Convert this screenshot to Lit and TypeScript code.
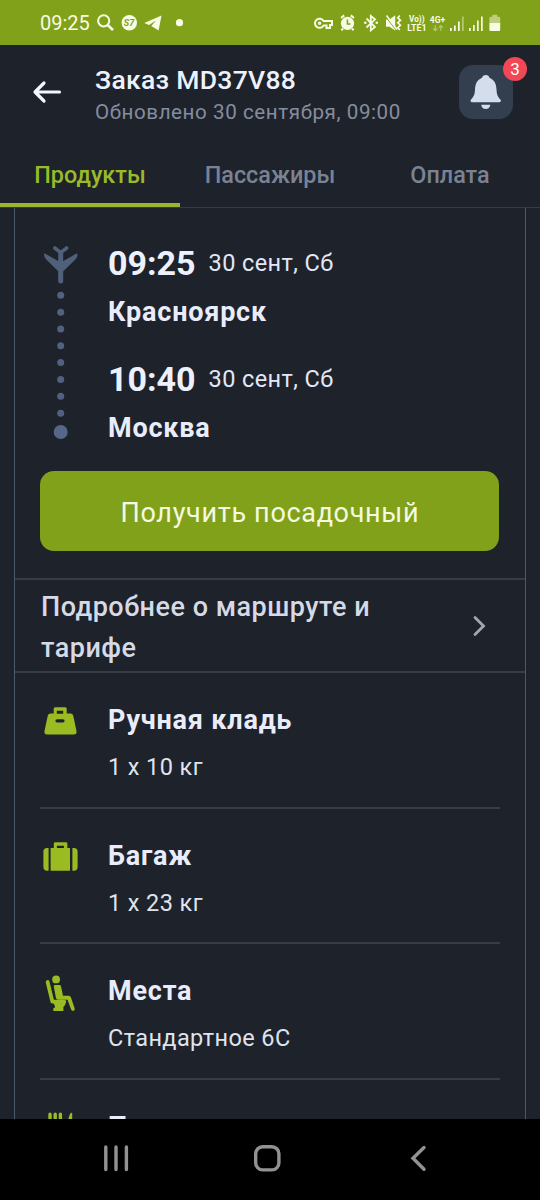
import { LitElement, html, css, svg } from "lit";
import { customElement, property } from "lit/decorators.js";

@customElement("status-bar")
export class StatusBar extends LitElement {
  static styles = css`
    :host { display: flex; justify-content: space-between; height: 45px; box-sizing: border-box; padding: 0 38px 0 40px; background: #82a11b; color: #f7fce4; font-family: Roboto, sans-serif; }
    .left { display: flex; gap: 7px; }
    .time { font-size: 20px; line-height: 45px; padding-top: 1px; height: 45px; box-sizing: border-box; }
    svg { display: block; }
    .tiny { font: 700 9px Roboto, sans-serif; }
    .logo { font: italic 700 9px Roboto, sans-serif; }
  `;
  render() {
    return html`
      <div class="left">
        <span class="time">09:25</span>
        <svg width="90" height="45" viewBox="97 0 90 45" fill="currentColor">
          <circle cx="103.7" cy="20.8" r="5.6" fill="none" stroke="currentColor" stroke-width="2"></circle>
          <path d="M107.8 25 L113 30.2" stroke="currentColor" stroke-width="2.6"></path>
          <circle cx="129.3" cy="22.8" r="7.7"></circle>
          <text class="logo" x="123.8" y="26" fill="#82a11b">S7</text>
          <path d="M161.5 15.6 L144.3 23 L149 25 L156 20.5 L151.3 26 L158.6 30.5 Z"></path>
          <circle cx="179.5" cy="22.7" r="3.6"></circle>
        </svg>
      </div>
      <svg width="190" height="45" viewBox="312 0 190 45" fill="currentColor">
        <g fill="none" stroke="currentColor" stroke-width="2">
          <path d="M323.6 21 H332 V25 H330 V28 H326.5 V25.5 H323.6 A4.6 4.6 0 1 1 323.6 21 Z"></path>
          <circle cx="319.6" cy="23.2" r="1" stroke-width="1.4"></circle>
          <path d="M341 18 L344.2 15.4 M354 18 L350.8 15.4 M343 28.5 L341.4 30.2 M352 28.5 L353.6 30.2"></path>
          <path d="M366.5 18.5 L375 27 L370.8 30.4 V16 L375 19.4 L366.5 27.5" stroke-width="1.8"></path>
        </g>
        <circle cx="347.5" cy="23.3" r="6.6"></circle>
        <path d="M347.4 19.5 V24 H350.5" fill="none" stroke="#82a11b" stroke-width="1.5"></path>
        <circle cx="365.3" cy="22.8" r="1.3"></circle><circle cx="376.8" cy="22.8" r="1.3"></circle>
        <path d="M386 19.5 H389.5 L395.2 15.2 V30.5 L389.5 26.8 H386 Z"></path>
        <path d="M385.5 16.5 L396 30" stroke="#82a11b" stroke-width="1"></path>
        <path d="M386.5 15.5 L397 29.5" stroke="currentColor" stroke-width="1.6"></path>
        <path d="M399.8 15.5 l-2 2.4 l2.6 2.4 l-2.6 2.5 l2.6 2.4 l-2.6 2.5 l2 2.3" fill="none" stroke="currentColor" stroke-width="1.7"></path>
        <text class="tiny" x="409" y="22.3" textLength="15.5" lengthAdjust="spacingAndGlyphs">Vo))</text>
        <text class="tiny" x="407.2" y="31" textLength="19.5" lengthAdjust="spacingAndGlyphs">LTE1</text>
        <text class="tiny" x="429.8" y="22.5" textLength="15.3" lengthAdjust="spacingAndGlyphs">4G+</text>
        <path d="M435.3 25 V30.5 M433.2 28.4 L435.3 30.6 L437.4 28.4 M440.8 31 V25.5 M438.7 27.7 L440.8 25.5 L442.9 27.7" fill="none" stroke="currentColor" stroke-width="1.1" opacity=".45"></path>
        <path d="M450 28 h1.7 v3 h-1.7z M454 25.5 h1.7 v5.5 h-1.7z M458 21.5 h1.7 v9.5 h-1.7z M469 28 h1.7 v3 h-1.7z M473 25 h1.7 v6 h-1.7z M477 20.5 h1.7 v10.5 h-1.7z M481 16.5 h1.7 v14.5 h-1.7z"></path>
        <path d="M462 16.5 h1.7 v14.5 h-1.7z" opacity=".45"></path>
        <path d="M492.3 14.8 h5 v2 h1.7 q1.2 0 1.2 1.2 v5.2 h-10.8 v-5.2 q0 -1.2 1.2 -1.2 h1.7z" opacity=".5"></path>
        <path d="M489.4 23 h10.8 v6.8 q0 1.2 -1.2 1.2 h-8.4 q-1.2 0 -1.2 -1.2z"></path>
      </svg>`;
  }
}

@customElement("order-header")
export class OrderHeader extends LitElement {
  static styles = css`
    :host { display: block; height: 163px; box-sizing: border-box; border-bottom: 1px solid #353b46; }
    .bar { display: grid; grid-template-columns: 94px 1fr 54px; padding: 20px 27px 0 0; height: 97px; box-sizing: border-box; }
    .back { display: block; }
    .title { margin: 0; padding-left: 1px; font-weight: 500; font-size: 26.5px; line-height: 30px; letter-spacing: .3px; color: #edf1fc; white-space: nowrap; }
    .updated { padding-left: 1px; font-size: 20.6px; line-height: 24px; margin-top: 5px; letter-spacing: .57px; color: #858d9e; white-space: nowrap; }
    .bell { position: relative; width: 54px; height: 54px; border-radius: 14px; background: #333f4f; }
    .badge { position: absolute; right: -14px; top: -8px; width: 24px; height: 24px; border-radius: 50%; background: #f24855; color: #fff; font-size: 17px; line-height: 24px; text-align: center; }
    .tabs { display: grid; grid-template-columns: repeat(3, 180px); height: 65px; }
    .tab { font-weight: 500; font-size: 23.4px; line-height: 65px; padding-top: 1px; color: #7a8294; text-align: center; box-sizing: border-box; height: 65px; }
    .active { color: #9aba2a; border-bottom: 4px solid #98b72f; }
  `;
  render() {
    return html`
      <div class="bar">
        <svg class="back" width="94" height="54" viewBox="0 65 94 54" fill="none" stroke="#f3f6ff" stroke-width="3.2" stroke-linecap="round" stroke-linejoin="round">
          <path d="M59.5 92 H35.5 M44 83 L35 92 L44 101"></path>
        </svg>
        <div>
          <h1 class="title">Заказ MD37V88</h1>
          <div class="updated">Обновлено 30 сентября, 09:00</div>
        </div>
        <div class="bell">
          <svg width="54" height="54" viewBox="459 65 54 54" fill="#d3ddec">
            <path d="M485.8 75 C487.8 75 489 76 489.5 77.8 C494.5 80 496.3 84 496.5 89.5 C496.8 95 498 97 500.2 99.2 C501.5 100.6 501 102.3 499 102.3 H472.4 C470.4 102.3 470 100.6 471.2 99.2 C473.5 97 474.7 95 475 89.5 C475.3 84 477 80 482 77.8 C482.6 76 483.8 75 485.8 75 Z"></path>
            <path d="M481.2 104.7 H490.3 C490 107.5 488.3 109 485.8 109 C483.2 109 481.5 107.5 481.2 104.7 Z"></path>
          </svg>
          <span class="badge">3</span>
        </div>
      </div>
      <div class="tabs">
        <div class="tab active">Продукты</div>
        <div class="tab">Пассажиры</div>
        <div class="tab">Оплата</div>
      </div>`;
  }
}

const icons: Record<string, unknown> = {
  bag: svg`<path fill-rule="evenodd" d="M15.2 .3 h10 q1.5 0 1.5 1.5 v4.8 h3.8 q2.1 0 2.7 2 l3.3 15.5 q.6 3.4 -2.6 3.4 H7.1 q-3.2 0 -2.6 -3.4 L7.8 8.6 q.6 -2 2.7 -2 h3.2 V1.8 Q13.7 .3 15.2 .3 Z M16.8 3.8 v3 h6.4 v-3 z M17 12.2 a1.6 1.6 0 0 0 0 3.2 h6 a1.6 1.6 0 0 0 0 -3.2 z"></path>`,
  suitcase: svg`<path fill-rule="evenodd" d="M15.2 -.7 h10.8 q1.4 0 1.4 1.4 v4.4 h2.6 v22.6 H10.6 V5.1 h3.2 V.7 q0 -1.4 1.4 -1.4z M16.9 2.7 v2.4 h7 v-2.4z"></path><path d="M8.6 5.1 v22.6 H7.1 q-3.7 0 -3.7 -3.7 V8.8 q0 -3.7 3.7 -3.7z M32.4 5.1 v22.6 h1.5 q3.7 0 3.7 -3.7 V8.8 q0 -3.7 -3.7 -3.7z"></path>`,
  seat: svg`<g transform="translate(.8 -1)"><circle cx="15.3" cy="2.4" r="3.9"></circle><path d="M6.8 5 L11.6 24.7 H23.5" fill="none" stroke="currentColor" stroke-width="3.8" stroke-linecap="round" stroke-linejoin="round"></path><path d="M14 8 h4.8 q1.2 0 1.4 1.2 l2 9.6 h5.6 q1.7 0 2.3 1.5 l3.8 11.2 q.5 1.8 -1.2 2.3 q-1.8 .4 -2.4 -1.2 L26.7 22.7 H17.5 q-2 0 -2.4 -2 L13 9.5 Q12.8 8 14 8Z M12.5 25.5 H25 q-.4 3 -2.4 4.5 v4 H12.5 v-2.5 q1.5 -.4 1.8 -1.7z"></path></g>`,
  meal: svg`<g transform="translate(.6 -2)"><path d="M9.4 2.3 V18 M14.6 2.3 V18 M19.8 2.3 V18" stroke="currentColor" stroke-width="3.4" stroke-linecap="round"></path><path d="M31.6 1.5 Q31.5 .5 30.3 .8 Q28 3 26.6 14 V24 h5z"></path></g>`,
};

@customElement("service-row")
export class ServiceRow extends LitElement {
  @property() icon = "";
  @property() name = "";
  @property() detail = "";
  static styles = css`
    :host { display: grid; grid-template-columns: 68px 1fr; height: 135.6px; box-sizing: border-box; border-bottom: 2px solid #373d47; }
    .icon { display: block; margin-top: 34px; color: #9abb22; overflow: visible; }
    .name { margin-top: 31px; font-weight: 700; font-size: 27px; line-height: 32px; letter-spacing: .8px; color: #e9edfb; }
    .detail { margin-top: 17px; font-size: 23.5px; line-height: 28px; letter-spacing: .4px; color: #dfe3f0; }
  `;
  render() {
    return html`
      <svg class="icon" width="42" height="36" viewBox="0 0 42 36" fill="currentColor">${icons[this.icon]}</svg>
      <div><div class="name">${this.name}</div><div class="detail">${this.detail}</div></div>`;
  }
}

@customElement("flight-leg")
export class FlightLeg extends LitElement {
  @property() time = "";
  @property() date = "";
  @property() city = "";
  static styles = css`
    :host { display: block; height: 116px; }
    .when { display: flex; align-items: center; height: 40px; gap: 13px; }
    .time { font-weight: 700; font-size: 34px; line-height: 40px; color: #edf1fd; }
    .date { font-size: 23.5px; line-height: 40px; letter-spacing: .4px; color: #e3e7f4; }
    .city { font-weight: 700; font-size: 27px; line-height: 32px; margin-top: 13px; letter-spacing: .78px; color: #e9edfb; }
  `;
  render() {
    return html`<div class="when"><span class="time">${this.time}</span><span class="date">${this.date}</span></div><div class="city">${this.city}</div>`;
  }
}

@customElement("app-root")
export class AppRoot extends LitElement {
  static styles = css`
    :host { display: flex; flex-direction: column; width: 540px; height: 1200px; overflow: hidden; background: #1e222b; font-family: Roboto, "Noto Sans", sans-serif; }
    status-bar, order-header, .nav { flex: none; }
    .scroll { flex: 1; min-height: 0; overflow: hidden; padding: 0 14px; }
    .card { box-sizing: border-box; border: solid #4c586d; border-width: 0 1px; height: 1000px; }
    .route { display: grid; grid-template-columns: 67px 1fr; padding: 35px 0 0 26px; height: 263px; box-sizing: border-box; }
    .route svg { display: block; }
    .board { display: block; width: 459px; height: 80px; margin: 0 0 0 25.4px; padding: 4px 0 0; border: 0; border-radius: 14px; background: #82a11b; color: #f4fae0; font: 400 27px Roboto, sans-serif; letter-spacing: .68px; }
    .more { display: flex; justify-content: space-between; align-items: center; box-sizing: border-box; height: 95px; margin-top: 27px; padding: 5px 38px 0 26px; border: solid #373d47; border-width: 2px 0; font-weight: 500; font-size: 27px; line-height: 41px; letter-spacing: .5px; color: #d5dae6; }
    .more span { width: 360px; }
    .more svg { margin-top: -5px; }
    .rows { margin: 0 25px; }
    .nav { display: grid; grid-template-columns: 1fr; height: 81px; background: #000; }
  `;
  render() {
    const dots = [295.3, 312.2, 329, 345.8, 362.6, 379.5, 396.3, 413.2];
    return html`
      <status-bar></status-bar>
      <order-header></order-header>
      <main class="scroll">
        <div class="card">
          <section class="route">
            <svg width="67" height="220" viewBox="41 243 67 220" fill="#516180">
              <g fill="none" stroke="#4f607b" stroke-linecap="round" stroke-linejoin="round">
                <path d="M60.7 252.5 V281" stroke-width="5"></path>
                <path d="M54.8 248 L60.7 252.6 L66.7 248" stroke-width="3.6"></path>
              </g>
              <path d="M44 254.2 Q44.3 253.2 45.4 253.8 L60.7 262.4 L76 253.8 Q77.3 253.2 77.5 254.4 Q77.6 257 75.6 259.2 L63 271.5 V275 H58.5 V271.5 L46 259.2 Q44 257 44 254.2 Z" fill="#4f607b"></path>
              ${dots.map((y) => svg`<circle cx="60.7" cy=${y} r="3.5"></circle>`)}
              <circle cx="60.7" cy="432" r="7" fill="#56678a"></circle>
            </svg>
            <div>
              <flight-leg time="09:25" date="30 сент, Сб" city="Красноярск"></flight-leg>
              <flight-leg time="10:40" date="30 сент, Сб" city="Москва"></flight-leg>
            </div>
          </section>
          <button class="board">Получить посадочный</button>
          <div class="more">
            <span>Подробнее о маршруте и тарифе</span>
            <svg width="16" height="24" viewBox="0 0 16 24" fill="none" stroke="#a1a8b5" stroke-width="2.8" stroke-linecap="round"><path d="M4 3.5 L12.5 12 L4 20.5"></path></svg>
          </div>
          <div class="rows">
            <service-row icon="bag" name="Ручная кладь" detail="1 x 10 кг"></service-row>
            <service-row icon="suitcase" name="Багаж" detail="1 x 23 кг"></service-row>
            <service-row icon="seat" name="Места" detail="Стандартное 6С"></service-row>
            <service-row icon="meal" name="Питание"></service-row>
          </div>
        </div>
      </main>
      <nav class="nav">
        <svg width="540" height="81" viewBox="0 1119 540 81" fill="none" stroke="#929292" stroke-width="3.4" stroke-linecap="round">
          <path d="M105.8 1147 V1169.5 M116 1147 V1169.5 M126.4 1147 V1169.5"></path>
          <rect x="255.7" y="1146.7" width="23.2" height="23.2" rx="7"></rect>
          <path d="M424 1147.5 L413 1158.3 L424 1169.3"></path>
        </svg>
      </nav>`;
  }
}
